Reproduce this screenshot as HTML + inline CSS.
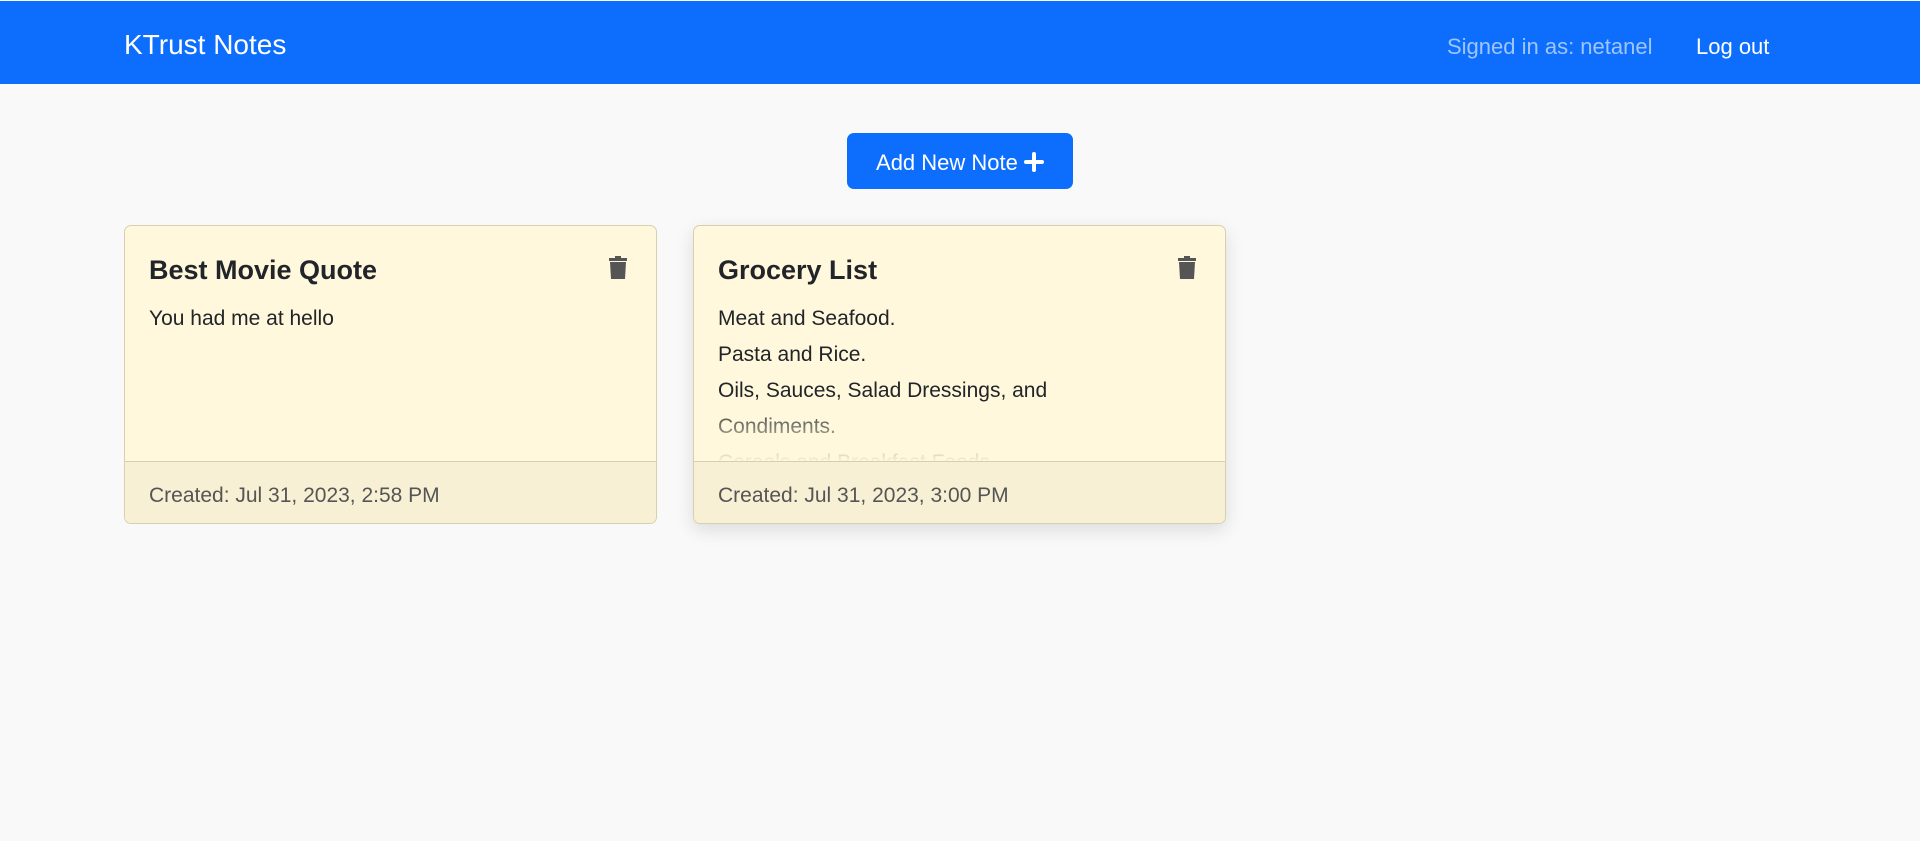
<!DOCTYPE html>
<html><head><meta charset="utf-8"><style>
*{box-sizing:border-box;margin:0;padding:0}
body{width:1920px;height:841px;background:#f9f9f9;font-family:"Liberation Sans",sans-serif;position:relative;overflow:hidden;color:#212529}
.nav{position:absolute;left:0;top:1px;width:1920px;height:83px;background:#0d6efd}
.brand{position:absolute;left:124px;top:28px;font-size:28px;color:#fff}
.signed{position:absolute;left:1447px;top:33px;font-size:22px;color:rgba(255,255,255,.6)}
.logout{position:absolute;left:1696px;top:33px;font-size:22px;color:#fff}
.btn{position:absolute;left:847px;top:133px;width:226px;height:56px;background:#0d6efd;border-radius:7px;color:#fff;font-size:22px;line-height:60px;text-align:center}
.card{position:absolute;top:225px;width:533px;height:299px;background:#fff8dc;border:1px solid #d8cfb0;border-radius:7px;overflow:hidden}
.card.sh{box-shadow:0 6px 18px rgba(0,0,0,.12)}
.title{position:absolute;left:24px;top:29px;font-size:27px;font-weight:bold;color:#212529}
.trash{position:absolute;right:29px;top:30px}
.body{position:absolute;left:24px;top:75px;right:24px;height:162px;overflow:hidden;font-size:21px;line-height:36px;color:#212529;
-webkit-mask-image:linear-gradient(to bottom,#000 62%,transparent 100%);mask-image:linear-gradient(to bottom,#000 62%,transparent 100%)}
.foot{position:absolute;left:0;right:0;bottom:0;height:62px;background:#f8f0d4;border-top:1px solid #d8cfb0;padding-left:24px;line-height:68px;font-size:21px;color:#555}
</style></head><body>
<div class="nav"><div class="brand">KTrust Notes</div><div class="signed">Signed in as: netanel</div><div class="logout">Log out</div></div>
<div class="btn">Add New Note <svg width="20" height="20" viewBox="0 0 20 20" style="vertical-align:-2px"><path d="M10 2v16M2 10h16" stroke="#fff" stroke-width="4" stroke-linecap="round"/></svg></div>
<div class="card" style="left:124px">
<div class="title">Best Movie Quote</div>
<svg class="trash" width="18" height="24" viewBox="0 0 18 24"><path d="M6 0h6v2h6v3H0V2h6z M1 6h16l-1 17H2z" fill="#555"/></svg>
<div class="body">You had me at hello</div>
<div class="foot">Created: Jul 31, 2023, 2:58 PM</div>
</div>
<div class="card sh" style="left:693px">
<div class="title">Grocery List</div>
<svg class="trash" width="18" height="24" viewBox="0 0 18 24"><path d="M6 0h6v2h6v3H0V2h6z M1 6h16l-1 17H2z" fill="#555"/></svg>
<div class="body">Meat and Seafood.<br>Pasta and Rice.<br>Oils, Sauces, Salad Dressings, and<br>Condiments.<br>Cereals and Breakfast Foods.</div>
<div class="foot">Created: Jul 31, 2023, 3:00 PM</div>
</div>
</body></html>
